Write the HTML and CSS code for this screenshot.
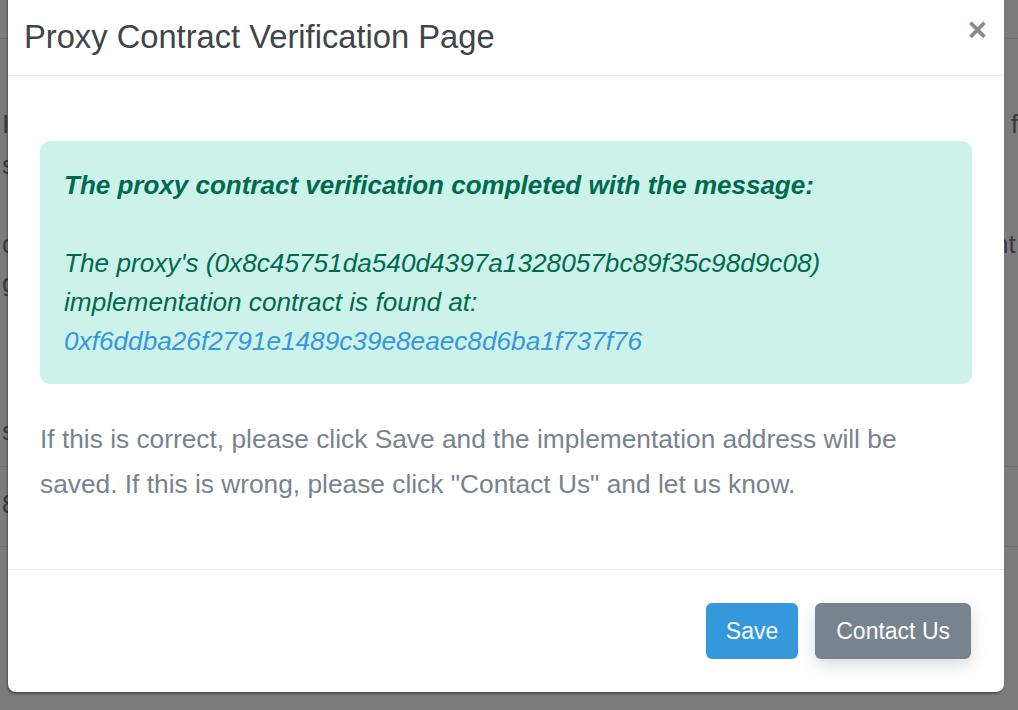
FILE: index.html
```html
<!DOCTYPE html>
<html lang="en">
<head>
<meta charset="utf-8">
<title>Proxy Contract Verification Page</title>
<link rel="stylesheet" href="styles.css">
</head>
<body>
<div class="page">
  <div class="topbar"></div>
  <div class="row r1"><span class="l">Is this a proxy?</span><span class="r">for</span></div>
  <div class="row r2"><span class="l">s</span><span class="r"></span></div>
  <div class="row r3"><span class="l">contract</span><span class="r shift">nt</span></div>
  <div class="row r4"><span class="l">g</span><span class="r"></span></div>
  <div class="row r5"><span class="l">s</span><span class="r"></span></div>
  <div class="rule h1"></div>
  <div class="row r6"><span class="l">8</span><span class="r"></span></div>
  <div class="rule h2"></div>
</div>

<div class="modal">
  <div class="modal-header">
    <h5 class="modal-title">Proxy Contract Verification Page</h5>
    <button class="close" type="button" aria-label="Close">×</button>
  </div>
  <div class="modal-body">
    <div class="alert">
      <p class="alert-head">The proxy contract verification completed with the message:</p>
      <p class="alert-msg">The proxy's (0x8c45751da540d4397a1328057bc89f35c98d9c08)<br>implementation contract is found at:<br><a class="addr" href="#">0xf6ddba26f2791e1489c39e8eaec8d6ba1f737f76</a></p>
    </div>
    <p class="note">If this is correct, please click Save and the implementation address will be saved. If this is wrong, please click "Contact Us" and let us know.</p>
  </div>
  <div class="modal-footer">
    <button class="btn btn-primary" type="button">Save</button>
    <button class="btn btn-secondary" type="button">Contact Us</button>
  </div>
</div>
</body>
</html>
```
FILE: styles.css
```css
* { box-sizing: border-box; }
html, body {
  margin: 0;
  padding: 0;
  width: 1018px;
  height: 710px;
  overflow: hidden;
  background: #7b7b7b;
  font-family: "Liberation Sans", Arial, Helvetica, sans-serif;
}
.page {
  width: 1018px;
  height: 710px;
  overflow: hidden;
  color: #383a3c;
  font-size: 26px;
}
.topbar {
  height: 39px;
  border-bottom: 1px solid #6d6d6d;
}
.row {
  display: grid;
  grid-template-columns: 1008px 1fr;
  height: 26px;
  line-height: 26px;
  white-space: nowrap;
}
.row .l { padding-left: 2px; overflow: hidden; }
.row .r { padding-left: 3px; }
.row .r.shift { margin-left: -17px; }
.r1 { margin-top: 72px; }
.r2 { margin-top: 15px; }
.r3 { margin-top: 53px; }
.r4 { margin-top: 13px; }
.r5 { margin-top: 122px; }
.rule { border-top: 1px solid #6d6d6d; }
.h1 { margin-top: 22px; }
.r6 { margin-top: 24px; }
.h2 { margin-top: 29px; }

.modal {
  position: absolute;
  top: -8px;
  left: 8px;
  width: 996px;
  height: 700px;
  background: #fff;
  border-radius: 8px;
  box-shadow: -1px 2px 2px rgba(0, 0, 0, 0.35);
  display: flex;
  flex-direction: column;
}
.modal-header {
  display: flex;
  align-items: flex-start;
  justify-content: space-between;
  padding: 25px 17px 19px 16px;
  border-bottom: 1px solid #e7eaf3;
}
.modal-title {
  margin: 0;
  font-size: 32.7px;
  line-height: 39px;
  font-weight: 400;
  color: #404549;
}
.close {
  border: 0;
  background: none;
  padding: 0;
  margin-top: -7px;
  font-family: "Liberation Sans", Arial, sans-serif;
  font-size: 33px;
  font-weight: 700;
  line-height: 39px;
  color: #8a8a8a;
}
.modal-body {
  padding: 65px 32px 0 32px;
  height: 493px;
}
.alert {
  background: #ccf2ea;
  border-radius: 10px;
  padding: 25px 24px 23px;
  color: #006a4e;
  font-size: 26.2px;
  line-height: 39px;
  font-style: italic;
}
.alert p { margin: 0; }
.alert-head {
  font-weight: 700;
  font-size: 26px;
  margin-bottom: 39px !important;
}
.addr {
  color: #3498db;
  text-decoration: none;
}
.note {
  margin: 33px 0 0;
  font-size: 26.3px;
  line-height: 45px;
  color: #77838f;
}
.modal-footer {
  display: flex;
  justify-content: flex-end;
  gap: 17px;
  padding: 33px 33px 33px 32px;
  border-top: 1px solid #e7eaf3;
}
.btn {
  border: 0;
  border-radius: 6px;
  padding: 11px 20px;
  font-family: "Liberation Sans", Arial, sans-serif;
  font-size: 23px;
  line-height: 34px;
  color: #fff;
}
.btn-primary { background: #3498db; }
.btn-secondary {
  background: #77838f;
  padding: 11px 21px;
  box-shadow: 0 6px 16px rgba(140, 152, 164, 0.35);
}
```
